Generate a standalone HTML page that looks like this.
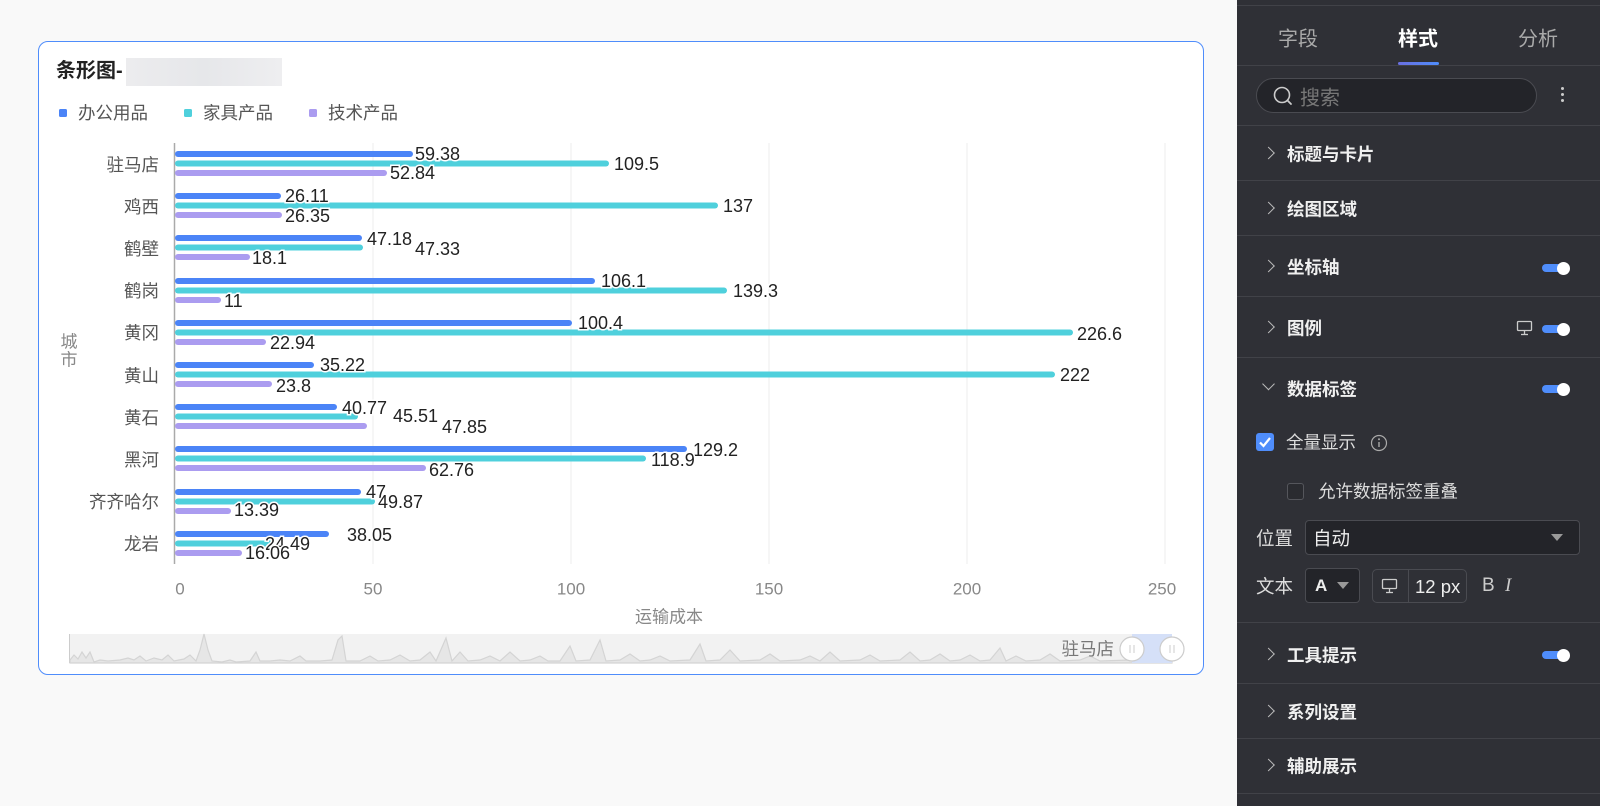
<!DOCTYPE html>
<html><head><meta charset="utf-8"><style>
*{margin:0;padding:0;box-sizing:border-box}
body{width:1600px;height:806px;background:#f9f9f9;font-family:"Liberation Sans","Noto Sans CJK SC",sans-serif;position:relative;overflow:hidden}
.card{position:absolute;left:38px;top:41px;width:1166px;height:634px;background:#fff;border:1.5px solid #4f8dfb;border-radius:10px}
.panel{position:absolute;left:1237px;top:0;width:363px;height:806px;background:#2f3036;color:#eee}
.ab{position:absolute}
.div{position:absolute;left:0;width:363px;height:1px;background:#414248}
.sec{position:absolute;left:50px;font-size:17.5px;font-weight:bold;color:#f0f0f0;transform:translateY(-50%)}
.chev{position:absolute;left:27px;width:9px;height:9px;border-right:1.5px solid #bbb;border-bottom:1.5px solid #bbb;transform:translateY(-50%) rotate(-45deg)}
.tog{position:absolute;left:305px;width:27px;height:8px;border-radius:4px;background:#4f8dfb;transform:translateY(-50%)}
.tog:after{content:"";position:absolute;right:-1px;top:-2.5px;width:13px;height:13px;border-radius:50%;background:#fff}
.t{position:absolute;font-size:17.5px;color:#ddd;transform:translateY(-50%)}
</style></head><body>
<div class="card"></div>
<svg class="ab" style="left:0;top:0" width="1210" height="690">
<text x="56" y="77" font-size="20" font-weight="bold" fill="#222">条形图-</text>
<defs><linearGradient id="bl" x1="0" x2="1"><stop offset="0" stop-color="#ececee"/><stop offset=".5" stop-color="#e6e7ea"/><stop offset="1" stop-color="#eeeef0"/></linearGradient></defs>
<rect x="126" y="58" width="156" height="28" fill="url(#bl)"/>
<g font-size="17.5" fill="#555">
<rect x="59" y="109" width="8" height="8" rx="1.5" fill="#4b84f7"/><text x="78" y="119">办公用品</text>
<rect x="184" y="109" width="8" height="8" rx="1.5" fill="#4fd0dc"/><text x="203" y="119">家具产品</text>
<rect x="309" y="109" width="8" height="8" rx="1.5" fill="#ab9cf0"/><text x="328" y="119">技术产品</text>
</g>
<g stroke="#eeeeee" stroke-width="1">
<line x1="373" y1="143" x2="373" y2="564"/><line x1="571" y1="143" x2="571" y2="564"/><line x1="769" y1="143" x2="769" y2="564"/><line x1="967" y1="143" x2="967" y2="564"/><line x1="1165" y1="143" x2="1165" y2="564"/>
</g>
<line x1="174.5" y1="143" x2="174.5" y2="564" stroke="#aaa" stroke-width="1.5"/>
<g stroke-linecap="round" stroke-width="6">
<g stroke="#4b84f7">
<line x1="178" y1="154" x2="410" y2="154"/><line x1="178" y1="196" x2="278" y2="196"/><line x1="178" y1="238" x2="359" y2="238"/><line x1="178" y1="281" x2="592" y2="281"/><line x1="178" y1="323" x2="569" y2="323"/><line x1="178" y1="365" x2="311" y2="365"/><line x1="178" y1="407" x2="334" y2="407"/><line x1="178" y1="449" x2="684" y2="449"/><line x1="178" y1="492" x2="358" y2="492"/><line x1="178" y1="534" x2="326" y2="534"/>
</g>
<g stroke="#4fd0dc">
<line x1="178" y1="163.5" x2="606" y2="163.5"/><line x1="178" y1="205.5" x2="715" y2="205.5"/><line x1="178" y1="247.5" x2="360" y2="247.5"/><line x1="178" y1="290.5" x2="724" y2="290.5"/><line x1="178" y1="332.5" x2="1070" y2="332.5"/><line x1="178" y1="374.5" x2="1052" y2="374.5"/><line x1="178" y1="416.5" x2="355" y2="416.5"/><line x1="178" y1="458.5" x2="643" y2="458.5"/><line x1="178" y1="501.5" x2="372" y2="501.5"/><line x1="178" y1="543.5" x2="270" y2="543.5"/>
</g>
<g stroke="#ab9cf0">
<line x1="178" y1="173" x2="384" y2="173"/><line x1="178" y1="215" x2="279" y2="215"/><line x1="178" y1="257" x2="247" y2="257"/><line x1="178" y1="300" x2="218" y2="300"/><line x1="178" y1="342" x2="263" y2="342"/><line x1="178" y1="384" x2="269" y2="384"/><line x1="178" y1="426" x2="364" y2="426"/><line x1="178" y1="468" x2="423" y2="468"/><line x1="178" y1="511" x2="228" y2="511"/><line x1="178" y1="553" x2="239" y2="553"/>
</g></g>
<g font-size="18" fill="#222" dominant-baseline="central" stroke="#fff" stroke-width="3" paint-order="stroke">
<text x="415" y="154">59.38</text><text x="614" y="164">109.5</text><text x="390" y="173">52.84</text>
<text x="285" y="196">26.11</text><text x="723" y="206">137</text><text x="285" y="216">26.35</text>
<text x="367" y="239">47.18</text><text x="415" y="249">47.33</text><text x="252" y="258">18.1</text>
<text x="601" y="281">106.1</text><text x="733" y="291">139.3</text><text x="224" y="301">11</text>
<text x="578" y="323">100.4</text><text x="1077" y="334">226.6</text><text x="270" y="343">22.94</text>
<text x="320" y="365">35.22</text><text x="1060" y="375">222</text><text x="276" y="386">23.8</text>
<text x="342" y="408">40.77</text><text x="393" y="416">45.51</text><text x="442" y="427">47.85</text>
<text x="693" y="450">129.2</text><text x="651" y="460">118.9</text><text x="429" y="470">62.76</text>
<text x="366" y="492">47</text><text x="378" y="502">49.87</text><text x="234" y="510">13.39</text>
<text x="347" y="535">38.05</text><text x="265" y="544">24.49</text><text x="245" y="553">16.06</text>
</g>
<g font-size="17.5" fill="#555" text-anchor="end" dominant-baseline="central">
<text x="159" y="165">驻马店</text><text x="159" y="207">鸡西</text><text x="159" y="249">鹤壁</text><text x="159" y="291">鹤岗</text><text x="159" y="333">黄冈</text><text x="159" y="376">黄山</text><text x="159" y="418">黄石</text><text x="159" y="460">黑河</text><text x="159" y="502">齐齐哈尔</text><text x="159" y="544">龙岩</text>
</g>
<g font-size="17" fill="#888" text-anchor="middle" dominant-baseline="central">
<text x="180" y="589">0</text><text x="373" y="589">50</text><text x="571" y="589">100</text><text x="769" y="589">150</text><text x="967" y="589">200</text><text x="1162" y="589">250</text>
<text x="669" y="617">运输成本</text>
<text x="69" y="342">城</text><text x="69" y="360">市</text>
</g>
<rect x="69" y="634" width="1103" height="29" fill="#f2f2f2"/>
<line x1="69.5" y1="634" x2="69.5" y2="663" stroke="#ccc"/>
<path d="M70 660 L74 655 L78 659 L82 652 L86 658 L90 652 L94 662 L100 660 L108 661 L120 660 L128 658 L134 660 L140 656 L146 661 L154 658 L162 660 L168 655 L174 661 L184 659 L190 655 L196 661 L200 650 L204 634 L208 650 L212 661 L222 662 L230 660 L236 662 L250 661 L256 652 L260 661 L270 661 L280 660 L290 661 L300 656 L306 661 L320 661 L332 660 L338 640 L342 636 L346 661 L360 661 L370 656 L378 661 L390 660 L400 655 L410 661 L420 660 L430 652 L436 661 L446 638 L452 661 L460 652 L468 661 L480 660 L490 656 L500 661 L510 652 L520 661 L530 660 L540 656 L548 661 L560 661 L570 646 L576 661 L590 660 L600 640 L606 661 L620 660 L630 654 L640 661 L650 660 L660 656 L670 661 L690 660 L700 644 L706 661 L720 660 L730 650 L740 661 L760 660 L770 654 L780 661 L800 660 L810 656 L820 661 L830 652 L840 661 L860 660 L870 655 L880 661 L900 660 L910 652 L920 661 L930 660 L940 654 L950 661 L960 660 L970 655 L980 661 L990 660 L1000 648 L1006 661 L1016 656 L1026 661 L1040 660 L1050 654 L1060 661 L1080 660 L1090 656 L1100 661 L1130 660 L1150 657 L1172 660 L1172 663 L70 663 Z" fill="#e6e6e6" stroke="#d4d4d4" stroke-width="1.2"/>
<rect x="1132" y="634" width="40" height="29" fill="#d5e0f8"/>
<text x="1114" y="649" font-size="17.5" fill="#777" text-anchor="end" dominant-baseline="central">驻马店</text>
<g fill="#fff" stroke="#ccc" stroke-width="1.2"><circle cx="1132" cy="649" r="12"/><circle cx="1172" cy="649" r="12"/></g>
<g stroke="#ccc" stroke-width="1"><line x1="1130" y1="645" x2="1130" y2="653"/><line x1="1134" y1="645" x2="1134" y2="653"/><line x1="1170" y1="645" x2="1170" y2="653"/><line x1="1174" y1="645" x2="1174" y2="653"/></g>
</svg>

<div class="panel">
<div class="div" style="top:5px"></div>
<div class="t" style="top:37px;font-size:20px;color:#aaa;transform:translate(-50%,-50%);left:61px">字段</div>
<div class="t" style="left:181px;top:37px;font-size:20px;color:#fff;font-weight:bold;transform:translate(-50%,-50%)">样式</div>
<div class="t" style="left:301px;top:37px;font-size:20px;color:#aaa;transform:translate(-50%,-50%)">分析</div>
<div class="ab" style="left:161px;top:62px;width:41px;height:3px;border-radius:2px;background:linear-gradient(90deg,#6a6fe0,#4f8dfb)"></div>
<div class="div" style="top:65px"></div>
<div class="ab" style="left:19px;top:78px;width:281px;height:35px;border-radius:18px;background:#232429;border:1px solid #4a4b51"></div>
<svg class="ab" style="left:35px;top:85px" width="22" height="22"><circle cx="10" cy="10" r="7.5" fill="none" stroke="#ccc" stroke-width="1.6"/><line x1="15.5" y1="15.5" x2="19" y2="19" stroke="#ccc" stroke-width="1.8" stroke-linecap="round"/></svg>
<div class="t" style="left:63px;top:96px;font-size:20px;color:#777">搜索</div>
<div class="ab" style="left:324px;top:87px;width:3px;height:3px;border-radius:50%;background:#ccc;box-shadow:0 6px 0 #ccc,0 12px 0 #ccc"></div>
<div class="div" style="top:125px"></div>
<div class="chev" style="top:153px"></div><div class="sec" style="top:154px">标题与卡片</div>
<div class="div" style="top:180px"></div>
<div class="chev" style="top:208px"></div><div class="sec" style="top:209px">绘图区域</div>
<div class="div" style="top:235px"></div>
<div class="chev" style="top:266px"></div><div class="sec" style="top:267px">坐标轴</div><div class="tog" style="top:268px"></div>
<div class="div" style="top:296px"></div>
<div class="chev" style="top:327px"></div><div class="sec" style="top:328px">图例</div><div class="tog" style="top:329px"></div>
<svg class="ab" style="left:279px;top:320px" width="18" height="16"><rect x="1.5" y="1.5" width="14" height="9" rx="1" fill="none" stroke="#ccc" stroke-width="1.3"/><line x1="8.5" y1="11" x2="8.5" y2="14" stroke="#ccc" stroke-width="1.3"/><line x1="5" y1="14.5" x2="12" y2="14.5" stroke="#ccc" stroke-width="1.3"/></svg>
<div class="div" style="top:357px"></div>
<div class="chev" style="top:384px;transform:translateY(-50%) rotate(45deg)"></div><div class="sec" style="top:389px">数据标签</div><div class="tog" style="top:389px"></div>
<div class="ab" style="left:19px;top:433px;width:18px;height:18px;border-radius:3px;background:#4f8dfb"></div>
<svg class="ab" style="left:19px;top:433px" width="18" height="18"><path d="M4 9.5 L7.5 13 L14 5" fill="none" stroke="#fff" stroke-width="2.2"/></svg>
<div class="t" style="left:49px;top:442px">全量显示</div>
<svg class="ab" style="left:133px;top:434px" width="18" height="18"><circle cx="9" cy="9" r="7.5" fill="none" stroke="#aaa" stroke-width="1.2"/><line x1="9" y1="8" x2="9" y2="13" stroke="#aaa" stroke-width="1.4"/><circle cx="9" cy="5.3" r="1" fill="#aaa"/></svg>
<div class="ab" style="left:50px;top:483px;width:17px;height:17px;border-radius:3px;border:1px solid #55565c;background:#2a2b30"></div>
<div class="t" style="left:81px;top:491px">允许数据标签重叠</div>
<div class="t" style="left:19px;top:538px;font-size:18.5px">位置</div>
<div class="ab" style="left:68px;top:520px;width:275px;height:35px;border-radius:4px;background:#232429;border:1px solid #4a4b51"></div>
<div class="t" style="left:76px;top:538px;font-size:18.5px;color:#eee">自动</div>
<div class="ab" style="left:314px;top:534px;width:0;height:0;border-left:6px solid transparent;border-right:6px solid transparent;border-top:7px solid #999"></div>
<div class="t" style="left:19px;top:586px;font-size:18.5px">文本</div>
<div class="ab" style="left:68px;top:568px;width:55px;height:35px;border-radius:4px;background:#232429;border:1px solid #4a4b51"></div>
<div class="t" style="left:78px;top:586px;font-size:17px;font-weight:bold;color:#eee">A</div>
<div class="ab" style="left:100px;top:582px;width:0;height:0;border-left:6px solid transparent;border-right:6px solid transparent;border-top:7px solid #999"></div>
<div class="ab" style="left:135px;top:569px;width:95px;height:34px;border-radius:5px;border:1px solid #4a4b51"></div>
<div class="ab" style="left:171px;top:570px;width:1px;height:32px;background:#4a4b51"></div>
<svg class="ab" style="left:144px;top:578px" width="18" height="16"><rect x="1.5" y="1.5" width="14" height="9" rx="1" fill="none" stroke="#ccc" stroke-width="1.3"/><line x1="8.5" y1="11" x2="8.5" y2="14" stroke="#ccc" stroke-width="1.3"/><line x1="5" y1="14.5" x2="12" y2="14.5" stroke="#ccc" stroke-width="1.3"/></svg>
<div class="t" style="left:178px;top:587px;font-size:18.5px;color:#eee">12 px</div>
<div class="t" style="left:245px;top:586px;font-size:19px;color:#ccc">B</div>
<div class="t" style="left:268px;top:586px;font-size:19px;color:#ccc;font-style:italic;font-family:'Liberation Serif',serif">I</div>
<div class="div" style="top:622px"></div>
<div class="chev" style="top:654px"></div><div class="sec" style="top:655px">工具提示</div><div class="tog" style="top:655px"></div>
<div class="div" style="top:683px"></div>
<div class="chev" style="top:711px"></div><div class="sec" style="top:712px">系列设置</div>
<div class="div" style="top:738px"></div>
<div class="chev" style="top:765px"></div><div class="sec" style="top:766px">辅助展示</div>
<div class="div" style="top:793px"></div>
</div>
</body></html>
